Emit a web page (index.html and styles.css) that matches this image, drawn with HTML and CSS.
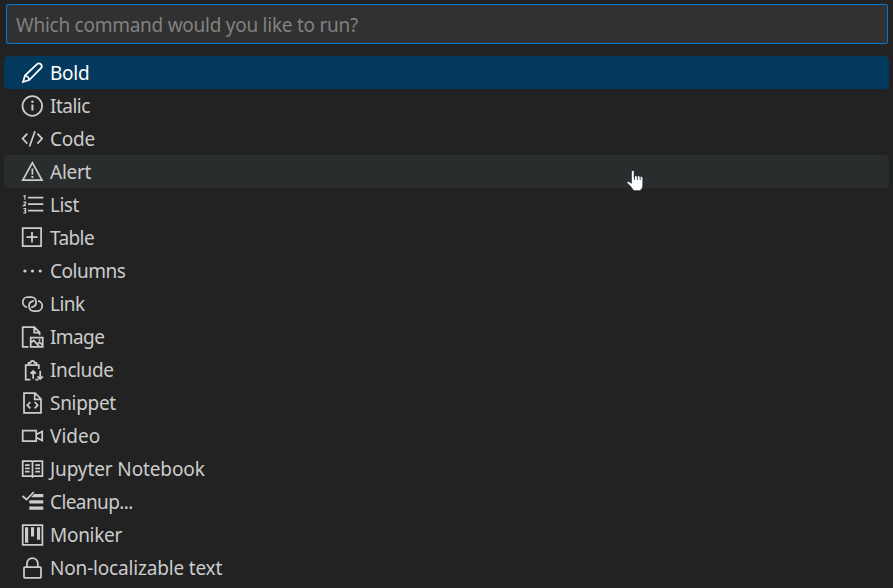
FILE: index.html
```
<!DOCTYPE html>
<html lang="en">
<head>
<meta charset="utf-8">
<title>Command palette</title>
<link rel="stylesheet" href="styles.css">
</head>
<body>
<main class="palette">
<input class="search" type="text" placeholder="Which command would you like to run?" aria-label="Command">
<ul class="list">
<li class="row selected"><svg class="icon" viewBox="0 0 24 33"><path d="M3 26l2-6.5L17 8.2Q19 6.6 21 8.3Q22.7 10 21 12.2L9.2 24zM5 19.5Q8.6 20.2 9.2 24"/></svg><span class="bold">Bold</span></li>
<li class="row"><svg class="icon" viewBox="0 0 24 33"><circle cx="12.3" cy="17" r="9.8"/><path d="M12.4 15.5v6" stroke-width="2"/><circle class="fill" cx="12.4" cy="12.8" r="1.2"/></svg><span class="italic">Italic</span></li>
<li class="row"><svg class="icon" viewBox="0 0 24 33"><path d="M7.3 11.6L2.6 16.6l4.7 5M17.4 11.6l4.7 5-4.7 5M15 9.3L9.5 24.5"/></svg><span class="code">Code</span></li>
<li class="row hover"><svg class="icon" viewBox="0 0 24 33"><path d="M12.4 7.7L2.8 25h19.2zM12.4 13.5v6.2"/><path d="M12.4 21v2" stroke-width="2"/></svg><span class="alert">Alert</span></li>
<li class="row"><svg class="icon" viewBox="0 0 24 33"><path d="M8 9.6h15.3M8 16.2h15.3M8 22.6h15.3"/><path stroke-width="1.2" d="M3.5 8.4l1.4-.8v4.1M3.4 14.2h2.2v1.3l-2.2 2.2h2.5M3.4 20.6h2.2v2h-1.5 1.5v2.3H3.4"/></svg><span class="lst">List</span></li>
<li class="row"><svg class="icon" viewBox="0 0 24 33"><path d="M2.7 7.2h18.4v17.8H2.7zM12 11v10.5M6.5 16.2h11"/></svg><span class="table">Table</span></li>
<li class="row"><svg class="icon" viewBox="0 0 24 33"><g class="fill"><circle cx="4.9" cy="17" r="1.6"/><circle cx="12.5" cy="17" r="1.6"/><circle cx="20.2" cy="17" r="1.6"/></g></svg><span class="columns">Columns</span></li>
<li class="row"><svg class="icon" viewBox="0 0 24 33"><path d="M7 20.3A5.2 5.2 0 0 1 7.8 10h3.4a5.1 5.1 0 0 1 1.2 10h-1.2M18 13.8A5.2 5.2 0 0 1 17.3 24.1h-3.4A5.1 5.1 0 0 1 12.7 14.1h1.2"/></svg><span class="link">Link</span></li>
<li class="row"><svg class="icon" viewBox="0 0 24 33"><path d="M8.5 26.8H2.7V7.1h11.7l5.2 5.2v3M14.2 7.1v5.4h5.4M10.7 17.5h12v9.3h-12zM11 22.4l2.7-1.9 5.3 5.7M17.5 24l2-1.8 2.8 2.8"/><circle class="fill" cx="19.5" cy="20" r=".9"/></svg><span class="image">Image</span></li>
<li class="row"><svg class="icon" viewBox="0 0 24 33"><path d="M10.5 26.5H5.7V12h13.1v4M8.5 12V9.8h2a2 2 0 0 1 4 0h2V12M13.2 25.8V18M10.6 20.6l2.6-2.7 2.6 2.7M20.2 17.7v8M17.5 23.4l2.7 2.7 2.7-2.7M15.5 26.5h3"/></svg><span class="include">Include</span></li>
<li class="row"><svg class="icon" viewBox="0 0 24 33"><path d="M4 7.2h11.2l5.8 5.8v13.9H4zM14.7 7.2v6.1H21M10.3 16l-3 3.2 3 3.2M14.7 16l3 3.2-3 3.2"/></svg><span class="snippet">Snippet</span></li>
<li class="row"><svg class="icon" viewBox="0 0 24 33"><path d="M2.7 11.7h13.5v10.5H2.7zM16.4 15.5l5.8-3v9l-5.8-3"/></svg><span class="video">Video</span></li>
<li class="row"><svg class="icon" viewBox="0 0 24 33"><path d="M2.7 9.2h8.8l1 1 1-1h8.9V24h-8.9l-1 1-1-1H2.7zM12.5 10v15M5 13h4.7M5 16.3h4.7M5 19.6h4.7M15.3 13H20M15.3 16.3H20M15.3 19.6H20"/></svg><span class="jupyter">Jupyter Notebook</span></li>
<li class="row"><svg class="icon" viewBox="0 0 24 33"><path d="M2.5 11l4 3.5 7.3-7.5"/><path class="fill" d="M14 9h9.3v3.2H11zM9.3 15.2h14v3.2h-14zM9.3 21.5h14v3.2h-14z"/></svg><span class="cleanup">Cleanup...</span></li>
<li class="row"><svg class="icon" viewBox="0 0 24 33"><path d="M2.7 7.1h19.7v19.7H2.7z"/><path class="fill" d="M5 9.2h3.2v15.6H5zM11 9.2h3.1v9.3H11zM17 9.2h3.1v12.6H17z"/></svg><span class="moniker">Moniker</span></li>
<li class="row"><svg class="icon" viewBox="0 0 24 33"><path d="M4.8 16h15.4q.8 0 .8.8v9.2q0 .9-.8.9H4.8q-.8 0-.8-.9v-9.2q0-.8.8-.8zM7 16v-3.5a5.4 5.4 0 0 1 10.8 0V16"/></svg><span class="nonloc">Non-localizable text</span></li>
</ul>
<svg class="cursor" viewBox="0 0 20 24"><path d="M5.3 2Q7.1.3 8.2 2.4V8l1.2-1.6 2 1.1.8-1 2 1.2.9-.7 1.8 1.4V17q-.2 3.5-3.4 4.8H8.2Q5.8 20 4.4 17.2L.9 13.7q.7-2 2.5-1l1.9 1.5z"/><path class="fingers" d="M8.4 7v4M11.3 7.5V11M14.2 8v3"/></svg>
</main>
</body>
</html>
```
FILE: styles.css
```
* { box-sizing: border-box; }
html, body { margin: 0; height: 100%; }
body { background: #222222; overflow: hidden; font-family: "Noto Sans", "Open Sans", sans-serif; color: #cccccc; }
.palette { position: relative; height: 588px; padding: 4px 4px 0; }
.search { display: block; width: 882px; height: 40px; margin: 0 0 12px 2px; padding: 1px 9px 0; border: 1px solid #0078d4; border-radius: 2px; background: #313131; color: #cccccc; font: 19px "Noto Sans", sans-serif; letter-spacing: -.26px; outline: none; }
.search::placeholder { color: #818181; opacity: 1; }
.list { list-style: none; margin: 0; padding: 0; }
.row { display: flex; align-items: center; width: 885px; height: 33px; padding-left: 16px; border-radius: 5px; font-size: 19px; line-height: 33px; white-space: nowrap; }
.row span { margin-left: 6px; padding-top: 2px; letter-spacing: -.4px; }
.row .bold, .row .code, .row .alert { letter-spacing: -.25px; }
.row .video { letter-spacing: 0; }
.row .jupyter { letter-spacing: -.12px; }
.row .nonloc { letter-spacing: -.18px; }
.row .snippet, .row .moniker { letter-spacing: -.3px; }
.row .table, .row .image { letter-spacing: -.6px; }
.row .columns, .row .link, .row .lst, .row .italic { letter-spacing: -.5px; }
.row .cleanup { letter-spacing: -.6px; }
.selected { background: #04395e; color: #ffffff; }
.hover { background: #2a2d2e; }
.icon { width: 24px; height: 33px; flex: none; fill: none; stroke: currentColor; stroke-width: 1.75; }
.fill { fill: currentColor; stroke: none; }
.cursor { position: absolute; left: 626px; top: 169px; width: 20px; height: 24px; fill: #ffffff; stroke: #171b26; stroke-width: .8; }
.fingers { fill: none; }
```
